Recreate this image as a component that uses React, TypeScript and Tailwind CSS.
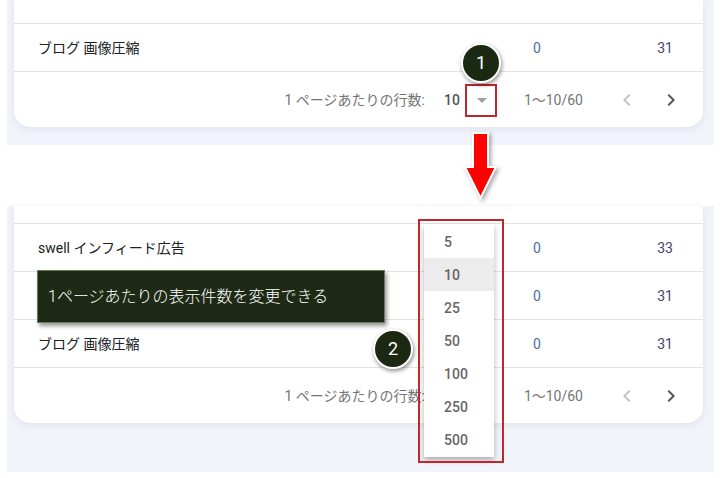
import React from 'react';

const FONT = "font-['Roboto','Noto_Sans_CJK_JP',sans-serif]";

type Row = { name: string; a: string; b: string };

const ArrowDrop = () => (
  <svg viewBox="0 0 24 24" className="w-6 h-6" fill="#9e9e9e">
    <path d="M7 10l5 5 5-5z" />
  </svg>
);

const Chevron = ({ dir, color }: { dir: 'left' | 'right'; color: string }) => (
  <svg viewBox="0 0 24 24" className="w-6 h-6" fill={color}>
    {dir === 'left' ? (
      <path d="M15.41 7.41L14 6l-6 6 6 6 1.41-1.41L10.83 12z" />
    ) : (
      <path d="M10 6L8.59 7.41 13.17 12l-4.58 4.59L10 18l6-6z" />
    )}
  </svg>
);

const TableRow = ({ row }: { row: Row }) => (
  <div className="flex items-center h-12 border-t border-[#e3e3e3] pl-6 pr-[30px] text-sm">
    <div className="flex-1 text-[#202124]">{row.name}</div>
    <div className="w-[100px] text-[#4a6fa0]">{row.a}</div>
    <div className="w-10 text-right text-[#4b3f6e]">{row.b}</div>
  </div>
);

const Footer = () => (
  <div className="flex items-center justify-end h-14 border-t border-[#e3e3e3] pr-5 text-sm text-[#757575]">
    <span>1 ページあたりの行数:</span>
    <span className="ml-[19px] font-medium text-[#555]">10</span>
    <span className="ml-[10px]">
      <ArrowDrop />
    </span>
    <span className="ml-[30px]">1〜10/60</span>
    <span className="ml-[32px]">
      <Chevron dir="left" color="#c4c4c4" />
    </span>
    <span className="ml-5">
      <Chevron dir="right" color="#555" />
    </span>
  </div>
);

const Badge = ({ n, className }: { n: string; className: string }) => (
  <div
    className={`absolute w-10 h-10 rounded-full bg-[#1b2912] border-2 border-white shadow-[1px_2px_4px_rgba(0,0,0,0.45)] flex items-center justify-center text-white text-lg ${className}`}
  >
    {n}
  </div>
);

export default function App() {
  const options = ['5', '10', '25', '50', '100', '250', '500'];

  return (
    <div className={`relative w-[723px] h-[478px] bg-white overflow-hidden ${FONT}`}>
      {/* top panel */}
      <div className="ml-[7px] mr-[9px] h-[145px] bg-[#f1f4fa] pl-[7px] pr-[11px]">
        <div className="bg-white rounded-b-2xl shadow-[0_2px_6px_rgba(200,208,225,0.5)]">
          <div className="h-[23px]" />
          <TableRow row={{ name: 'ブログ 画像圧縮', a: '0', b: '31' }} />
          <Footer />
        </div>
      </div>

      {/* bottom panel */}
      <div className="mt-[61px] ml-[7px] mr-[9px] h-[266px] bg-[#f1f4fa] pl-[7px] pr-[11px]">
        <div className="bg-white rounded-b-2xl shadow-[0_2px_6px_rgba(200,208,225,0.5)]">
          <div className="h-[17px]" />
          <TableRow row={{ name: 'swell インフィード広告', a: '0', b: '33' }} />
          <TableRow row={{ name: '', a: '0', b: '31' }} />
          <TableRow row={{ name: 'ブログ 画像圧縮', a: '0', b: '31' }} />
          <Footer />
        </div>
      </div>

      {/* annotation: step 1 */}
      <div className="absolute left-[465px] top-[84px] w-8 h-[33px] border-2 border-[#c0272d]" />
      <Badge n="1" className="left-[461px] top-[43px]" />

      <svg
        className="absolute left-[463px] top-[131px] drop-shadow-[2px_2px_2px_rgba(0,0,0,0.35)]"
        width="36"
        height="70"
        viewBox="0 0 36 70"
      >
        <polygon
          points="10,2 25,2 25,36 33,36 17.5,67 2,36 10,36"
          fill="#ff0000"
          stroke="#fff"
          strokeWidth="2"
          strokeLinejoin="miter"
        />
      </svg>

      {/* dropdown menu */}
      <div className="absolute left-[424px] top-[224px] w-[70px] bg-white py-px shadow-[0_3px_6px_rgba(0,0,0,0.3)]">
        {options.map((o) => (
          <div
            key={o}
            className={`h-[33px] flex items-center pl-5 text-sm font-medium text-[#666] ${o === '10' ? 'bg-[#ececec]' : ''}`}
          >
            {o}
          </div>
        ))}
      </div>
      <div className="absolute left-[418px] top-[219px] w-[86px] h-[244px] border-2 border-[#c0272d]" />

      {/* tooltip */}
      <div className="absolute left-[37px] top-[270px] w-[348px] h-[53px] bg-[#1e2a15] border border-[#6b7a5c] shadow-[2px_3px_4px_rgba(0,0,0,0.4)] flex items-center pl-[10px] text-white text-base font-light">
        1ページあたりの表示件数を変更できる
      </div>

      <Badge n="2" className="left-[373px] top-[329px]" />
    </div>
  );
}
